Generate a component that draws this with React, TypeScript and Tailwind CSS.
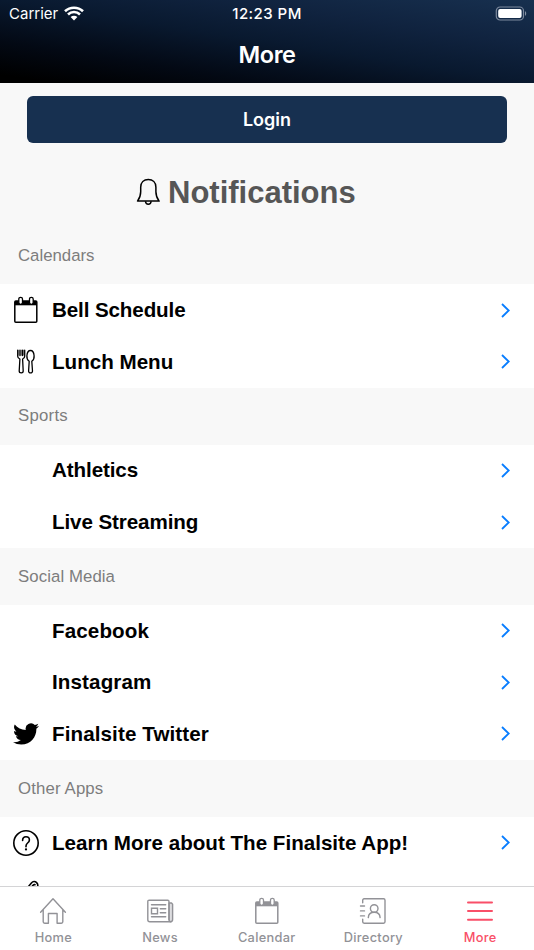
import React from "react";

type IconProps = { className?: string };

function CalendarIcon({ className }: IconProps) {
  return (
    <svg viewBox="0 0 26 28" className={className} fill="none" stroke="currentColor">
      <rect x="1.8" y="5" width="22" height="21.2" rx="1" strokeWidth="1.5" />
      <path d="M2 5h21.6v4.3H2z" fill="currentColor" stroke="none" />
      <rect x="5.8" y="1.3" width="3.7" height="7" rx="1.8" fill="#fff" strokeWidth="1.3" />
      <rect x="16.5" y="1.3" width="3.7" height="7" rx="1.8" fill="#fff" strokeWidth="1.3" />
    </svg>
  );
}

function CutleryIcon() {
  return (
    <svg viewBox="0 0 26 28" className="h-7 w-[26px]" fill="none" stroke="currentColor" strokeWidth="1.3" strokeLinejoin="round" strokeLinecap="round">
      <path d="M4.7 2.2v6c0 1.6 1 2.3 2.2 2.8L6.2 23c0 2.5 4 2.5 4 0L9.6 11c1.3-.5 2.1-1.3 2.1-2.8v-6M7 2.2v5.4M9.4 2.2v5.4" />
      <path d="M5.8 2.2v5M8.2 2.2v5M10.6 2.2v5" strokeWidth=".6" />
      <path d="M16.2 13.2C14.4 12 13.7 10 13.9 7.8c.2-3 1.5-5.3 3.6-5.3s3.4 2.3 3.6 5.3c.2 2.2-.5 4.2-2.3 5.4l.7 9.8c.1 2.5-4 2.5-3.9 0z" />
    </svg>
  );
}

function TwitterIcon() {
  return (
    <svg viewBox="0 0 24 24" className="size-[26px]" fill="currentColor">
      <path d="M23.95 4.57a10 10 0 0 1-2.82.77 4.96 4.96 0 0 0 2.16-2.72c-.95.55-2 .95-3.13 1.18a4.92 4.92 0 0 0-8.38 4.48C7.69 8.1 4.07 6.13 1.64 3.16a4.93 4.93 0 0 0 1.52 6.57 4.9 4.9 0 0 1-2.23-.61v.06a4.92 4.92 0 0 0 3.95 4.83 5 5 0 0 1-2.21.08 4.94 4.94 0 0 0 4.6 3.42A9.87 9.87 0 0 1 0 19.54a13.99 13.99 0 0 0 7.56 2.21c9.05 0 14-7.5 14-13.98 0-.21 0-.42-.02-.63a9.94 9.94 0 0 0 2.46-2.55z" />
    </svg>
  );
}

function QuestionIcon() {
  return (
    <svg viewBox="0 0 26 26" className="size-[26px]" fill="none" stroke="currentColor" strokeWidth="1.6">
      <circle cx="13" cy="13" r="12.2" />
      <path d="M9.6 10.4c0-2.2 1.4-3.7 3.4-3.7s3.4 1.3 3.4 3.2c0 1.5-.8 2.3-1.8 3.1-1.1.9-1.6 1.5-1.6 3.1v.7" strokeLinecap="round" />
      <circle cx="13" cy="19.4" r="1.15" fill="currentColor" stroke="none" />
    </svg>
  );
}

function BellIcon() {
  return (
    <svg viewBox="0 0 24 28" className="h-7 w-6" fill="none" stroke="#000" strokeWidth="1.5" strokeLinejoin="round">
      <path d="M1.5 23.1c1.8-2.4 3.2-5.8 3.2-9.4V9.2c0-4.8 3.2-7.7 7.6-7.7s7.6 2.9 7.6 7.7v4.5c0 3.6 1.4 7 3.2 9.4z" />
      <path d="M9.5 23.2c.1 1.9 1.2 3 2.8 3s2.7-1.1 2.8-3" />
    </svg>
  );
}

function HomeIcon() {
  return (
    <svg viewBox="0 0 28 28" className="size-7" fill="none" stroke="currentColor" strokeWidth="1.4" strokeLinejoin="round" strokeLinecap="round">
      <path d="M1.6 15.2 14 1.8l12.4 13.4M4.2 12.6v12.2c0 1 .4 1.4 1.4 1.4h3.8v-9.7h8.7v9.7h4.3c1 0 1.4-.4 1.4-1.4V12.6" />
    </svg>
  );
}

function NewsIcon() {
  return (
    <svg viewBox="0 0 28 28" className="size-7" fill="none" stroke="currentColor" strokeWidth="1.4" strokeLinejoin="round" strokeLinecap="round">
      <path d="M23 6h2.5l1.1 1.2v15.4c0 1.4-.5 2.1-1.8 2.1S23 23.9 23 22.6z" fill="#dddde0" />
      <path d="M24.8 24.7H3.8c-1.3 0-2-.7-2-2V4.5c0-.8.5-1.3 1.3-1.3h18.6c.8 0 1.3.5 1.3 1.3v18.1" />
      <path d="M5.5 7.8h14.2M5.5 19.8h14.2M14.3 11.8h5.4M14.3 15.8h5.4" />
      <path d="M5.5 11.2h6v5.5h-6z" strokeLinejoin="miter" />
    </svg>
  );
}

function DirectoryIcon() {
  return (
    <svg viewBox="0 0 28 28" className="size-7" fill="none" stroke="currentColor" strokeWidth="1.4" strokeLinejoin="round" strokeLinecap="round">
      <path d="M3.7 5.7V3.2c0-.8.6-1.4 1.4-1.4h19.5c.8 0 1.4.6 1.4 1.4v21.6c0 .8-.6 1.4-1.4 1.4H5.1c-.8 0-1.4-.6-1.4-1.4v-2.5M1.5 9h4M1.5 13.9h4M1.5 18.9h4" />
      <circle cx="15.2" cy="11.5" r="3.8" />
      <path d="M9.3 20.6c.2-3.3 2.6-5.3 5.9-5.3s5.7 2 5.9 5.3" />
    </svg>
  );
}

function MenuIcon() {
  return (
    <svg viewBox="0 0 28 28" className="size-7" stroke="currentColor" strokeWidth="2" strokeLinecap="round">
      <path d="M2 5.4h24M2 14h24M2 22.7h24" />
    </svg>
  );
}

function Row({ label, tracking = "", icon }: { label: string; tracking?: string; icon?: React.ReactNode }) {
  return (
    <div className="flex h-[51.65px] items-center bg-white">
      <div className="flex w-[52px] shrink-0 justify-center">{icon}</div>
      <span className={`text-[20.6px] leading-6 font-bold whitespace-nowrap text-black ${tracking}`}>{label}</span>
      <svg className="mr-[23px] ml-auto h-[15px] w-[11px]" viewBox="0 0 11 15" fill="none" stroke="#087dff" strokeWidth="1.8">
        <path d="m2 1 6.7 6.5L2 14" />
      </svg>
    </div>
  );
}

function SectionTitle({ children, tracking = "" }: { children: string; tracking?: string }) {
  return (
    <h2 className={`flex h-[57px] items-center pl-[18px] text-[16.8px] text-[#7d7d7d] ${tracking}`}>{children}</h2>
  );
}

function Tab({ label, icon, active }: { label: string; icon: React.ReactNode; active?: boolean }) {
  return (
    <div className={`flex w-[106.7px] flex-col items-center pt-[10px] ${active ? "text-[#f94f68]" : "text-[#929297]"}`}>
      {icon}
      <span className="mt-1 text-[12.8px] leading-[18px] font-medium tracking-[0.3px]">{label}</span>
    </div>
  );
}

export default function App() {
  return (
    <div className="flex h-[950px] w-[534px] flex-col overflow-hidden bg-[#f8f8f8] font-['Liberation_Sans',Arial,sans-serif]">
      <header className="h-[82.5px] shrink-0 bg-[linear-gradient(to_top_right,#000000_5%,#030914_25%,#09192f_50%,#10233f_72%,#17304f_100%)] font-[Inter,sans-serif] text-white">
        <div className="grid h-7 grid-cols-3 items-center">
          <div className="flex items-center pl-[9px] text-[15px]">
            <span>Carrier</span>
            <svg viewBox="0 0 20 15" className="mb-[2px] ml-[6px] h-[15px] w-5" fill="none" stroke="#fff" strokeWidth="2.6">
              <path d="M1 5.3a13 13 0 0 1 18 0M4 8.5a8.6 8.6 0 0 1 12 0" />
              <path d="M6.6 11.1a4.9 4.9 0 0 1 6.8 0L10 14.5z" fill="#fff" stroke="none" />
            </svg>
          </div>
          <span className="text-center text-[15px] font-medium tracking-[0.45px]">12:23 PM</span>
          <svg viewBox="0 0 32 15" className="mr-[7px] mb-[2px] h-[15px] w-8 justify-self-end">
            <rect x="1.3" y="1" width="27.2" height="13" rx="3.8" fill="none" stroke="#7c899d" strokeWidth="1.2" />
            <rect x="3.2" y="2.9" width="23.4" height="9.2" rx="2" fill="#fff" />
            <path d="M30 5.2c1.6.5 1.6 4.1 0 4.6z" fill="#8591a3" />
          </svg>
        </div>
        <h1 className="text-center text-[23.5px] leading-[53px] font-semibold tracking-[-0.4px]">More</h1>
      </header>
      <main className="min-h-0 flex-1 overflow-hidden">
        <button className="mx-[27px] mt-[13px] block h-[47.5px] w-[480px] rounded-md bg-[#173050] pt-px font-[Inter,sans-serif] text-[18px] font-semibold text-white">
          Login
        </button>
        <div className="flex h-[84.3px] items-center pt-[14px] pl-[136px]">
          <BellIcon />
          <span className="mt-[2px] ml-2 text-[31px] font-bold text-[#565656]">Notifications</span>
        </div>
        <SectionTitle>Calendars</SectionTitle>
        <Row label="Bell Schedule" tracking="tracking-[-0.12px]" icon={<CalendarIcon className="h-7 w-[26px]" />} />
        <Row label="Lunch Menu" icon={<CutleryIcon />} />
        <SectionTitle tracking="tracking-[0.25px]">Sports</SectionTitle>
        <Row label="Athletics" tracking="tracking-[-0.1px]" />
        <Row label="Live Streaming" tracking="tracking-[-0.1px]" />
        <SectionTitle tracking="tracking-[0.08px]">Social Media</SectionTitle>
        <Row label="Facebook" tracking="tracking-[0.12px]" />
        <Row label="Instagram" tracking="tracking-[0.12px]" />
        <Row label="Finalsite Twitter" tracking="tracking-[0.1px]" icon={<TwitterIcon />} />
        <SectionTitle tracking="tracking-[0.14px]">Other Apps</SectionTitle>
        <Row label="Learn More about The Finalsite App!" icon={<QuestionIcon />} />
        <div className="h-[52px] bg-white pt-3 pl-[13px]">
          <svg viewBox="0 0 28 28" className="size-7" fill="none" stroke="#000" strokeWidth="1.6">
            <path d="M15.5 6.5 18.4 3c1.6-1.8 3.6-1.9 5.2-.4 1.1 1.1 1.5 2.4 1 3.9M18.5 7l2-2.1c.8-.8 1.5-.3 1.8.5" />
          </svg>
        </div>
      </main>
      <nav className="flex h-16 shrink-0 border-t border-[#d4d4d6] bg-white font-[Inter,sans-serif]">
        <Tab label="Home" icon={<HomeIcon />} />
        <Tab label="News" icon={<NewsIcon />} />
        <Tab label="Calendar" icon={<CalendarIcon className="h-7 w-[26px]" />} />
        <Tab label="Directory" icon={<DirectoryIcon />} />
        <Tab label="More" active icon={<MenuIcon />} />
      </nav>
    </div>
  );
}
